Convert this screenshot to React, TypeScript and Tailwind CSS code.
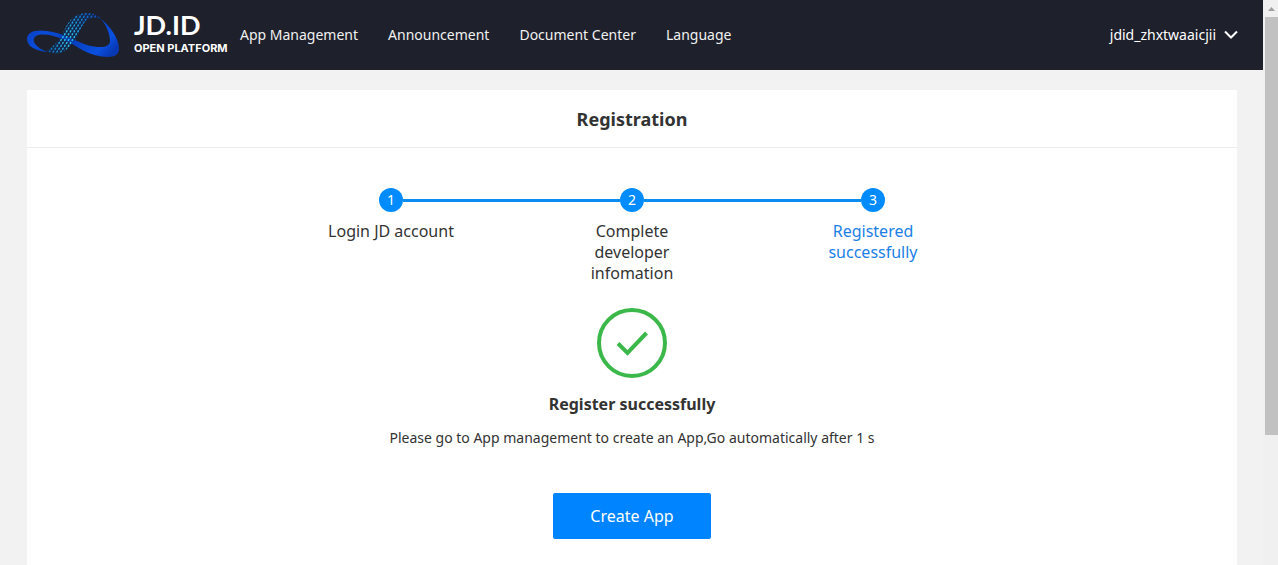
import { Fragment } from "react";

const navItems = ["App Management", "Announcement", "Document Center", "Language"];

const steps = [
  { label: "Login JD account", width: "w-36", current: false },
  { label: "Complete developer infomation", width: "w-24", current: false },
  { label: "Registered successfully", width: "w-24", current: true },
];

const RIBBON =
  "M20 46C29 41 33 35 38 26C43 14 50 8 61 8C67 8 72 10 75 14C66 11 61 13 57 20C52 29 50 37 41 44C36 49 28 50 20 46Z";

function RibbonLogo() {
  const dots = [];
  for (let row = 0; row < 16; row++) {
    for (let col = 0; col < 18; col++) {
      const x = 16 + col * 3.8 + (row % 2) * 1.9;
      const y = 6 + row * 2.9;
      dots.push(
        <ellipse
          key={`${row}-${col}`}
          cx={x}
          cy={y}
          rx="0.8"
          ry="1.3"
          transform={`rotate(25 ${x} ${y})`}
        />,
      );
    }
  }
  return (
    <svg viewBox="0 0 96 56" className="h-14 w-24 shrink-0" aria-hidden="true">
      <defs>
        <linearGradient id="band" x1="0" y1="0.3" x2="1" y2="0.7">
          <stop offset="0" stopColor="#0b3fc0" />
          <stop offset="0.2" stopColor="#0a4cd8" />
          <stop offset="0.5" stopColor="#063cb8" />
          <stop offset="0.85" stopColor="#0a50e0" />
          <stop offset="1" stopColor="#0838b4" />
        </linearGradient>
        <linearGradient
          id="dots"
          gradientUnits="userSpaceOnUse"
          x1="22"
          y1="48"
          x2="74"
          y2="10"
        >
          <stop offset="0" stopColor="#0a5fa5" />
          <stop offset="0.35" stopColor="#2fc4e8" />
          <stop offset="0.6" stopColor="#1f9cd4" />
          <stop offset="1" stopColor="#0846b8" />
        </linearGradient>
        <clipPath id="ribbon">
          <path d={RIBBON} />
        </clipPath>
      </defs>
      <path
        d="M22 47C9 46 1 41 1 34C1 27 9 24 21 26C37 28 47 35 61 40C75 44 84 42 84 36C84 29 80 19 74 13C84 21 93 33 93 44C93 49 89 52 82 52C64 52 52 42 39 35C27 30 16 28 10 31C4 35 10 43 22 47Z"
        fill="url(#band)"
      />
      <path d={RIBBON} fill="#07338c" fillOpacity="0.35" />
      <g clipPath="url(#ribbon)" fill="url(#dots)">
        {dots}
      </g>
    </svg>
  );
}

function Header() {
  return (
    <header className="flex h-[70px] items-center bg-[#1e202b] pr-[25px] pl-[26px] text-white">
      <a href="#home" className="flex items-center pb-1">
        <RibbonLogo />
        <span className="ml-3 flex w-[94px] flex-col whitespace-nowrap">
          <span className="font-['Lato',sans-serif] text-[27px] leading-[26px] font-bold">
            JD.ID
          </span>
          <span className="mt-1 font-['Inter',sans-serif] text-[11px] leading-3 font-bold">
            OPEN PLATFORM
          </span>
        </span>
      </a>
      <nav className="ml-3 flex gap-[30px] text-sm whitespace-nowrap text-[#f0f0f0]">
        {navItems.map((item) => (
          <a key={item} href="#nav">
            {item}
          </a>
        ))}
      </nav>
      <button type="button" className="ml-auto flex items-center gap-2 text-sm">
        jdid_zhxtwaaicjii
        <svg viewBox="0 0 14 10" className="h-[10px] w-[14px]" aria-hidden="true">
          <path d="M1 1.5L7 7.5L13 1.5" fill="none" stroke="white" strokeWidth="2" />
        </svg>
      </button>
    </header>
  );
}

function Steps() {
  return (
    <ol className="mx-auto flex w-[506px] max-w-full items-start">
      {steps.map((step, i) => (
        <Fragment key={step.label}>
          {i > 0 && <li aria-hidden="true" className="mt-[11px] h-[3px] flex-1 bg-[#0a8cf0]" />}
          <li className="flex w-6 flex-col items-center">
            <span className="flex size-6 items-center justify-center rounded-full bg-[#008cff] text-sm text-white">
              {i + 1}
            </span>
            <span
              className={`${step.width} ${step.current ? "text-[#1a80e6]" : "text-[#333]"} mt-[9px] shrink-0 text-center text-base leading-[21px]`}
            >
              {step.label}
            </span>
          </li>
        </Fragment>
      ))}
    </ol>
  );
}

export default function App() {
  return (
    <div className="flex h-screen overflow-hidden bg-[#f2f2f2] font-['Noto_Sans',sans-serif] text-[#333]">
      <div className="min-w-0 flex-1">
        <Header />
        <main className="mt-5 mr-[26px] ml-[27px] min-h-screen bg-white">
          <h1 className="border-b border-[#eee] pt-[17px] pb-[15px] text-center text-lg leading-[25px] font-bold">
            Registration
          </h1>
          <div className="flex flex-col items-center pt-10">
            <Steps />
            <svg viewBox="0 0 70 70" className="mt-6 size-[70px]" aria-hidden="true">
              <circle cx="35" cy="35" r="33" fill="none" stroke="#3cb84a" strokeWidth="4" />
              <path d="M21 35.5L30.5 45L49.5 25" fill="none" stroke="#3cb84a" strokeWidth="4" />
            </svg>
            <h2 className="mt-4 text-base leading-5 font-bold">Register successfully</h2>
            <p className="mt-3 text-sm leading-6">
              Please go to App management to create an App,Go automatically after 1 s
            </p>
            <button
              type="button"
              className="mt-[43px] h-[46px] w-[158px] rounded-xs bg-[#0084ff] text-base text-white"
            >
              Create App
            </button>
          </div>
        </main>
      </div>
      <div className="flex w-[15px] shrink-0 flex-col items-end bg-[#f0f0f0]" aria-hidden="true">
        <svg viewBox="0 0 13 17" className="h-[17px] w-[13px]">
          <path d="M3 11L6.5 7L10 11Z" fill="#a0a0a0" />
        </svg>
        <div className="h-[74%] w-[13px] bg-[#c1c1c1]" />
      </div>
    </div>
  );
}
